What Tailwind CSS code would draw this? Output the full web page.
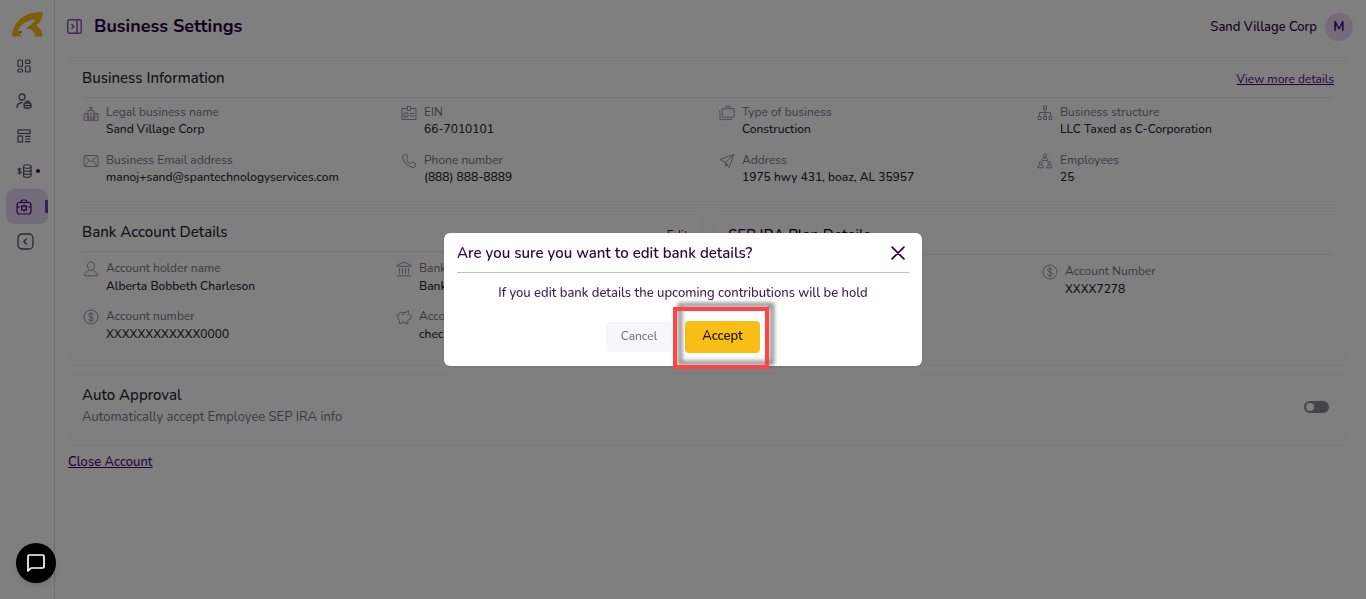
<!DOCTYPE html>
<html lang="en">
<head>
  <meta charset="UTF-8">
  <meta name="viewport" content="width=device-width, initial-scale=1.0">
  <title>Business Settings</title>
  <script src="https://cdn.jsdelivr.net/npm/@tailwindcss/browser@4"></script>
</head>
<body class="bg-white font-['Nunito','Noto_Sans',sans-serif] text-[12px] leading-4 text-[#24242a]">

  <!-- shared icons -->
  <svg class="hidden">
    <symbol id="i-building" viewBox="0 0 16 16"><path d="M1 15V8.500h4V15M5 15V5.500h6V15M11 15V8.500h4V15M.5 15.300h15M8 5.500V1.500M6 3h4M2.500 10.500h1M2.500 12.500h1M12.500 10.500h1M12.500 12.500h1M7 15v-3h2v3M7 8h2M7 10h2"/></symbol>
    <symbol id="i-badge" viewBox="0 0 16 16"><path d="M6 3.500H1v11h14v-11h-5M6.500 1.500h3v4h-3zM3 8h4v4H3zM9 8.500h4.500M9 11h4.500"/></symbol>
    <symbol id="i-cases" viewBox="0 0 17 16"><path d="M3.500 3.500h12.500v9H3.500zM7.500 3.500V1h4.500v2.500M1 5v10h13"/></symbol>
    <symbol id="i-tree" viewBox="0 0 16 16"><path d="M6.500 1h3v3h-3zM1 11.500h3v3H1zM6.500 11.500h3v3h-3zM12 11.500h3v3h-3zM8 4v7.500M2.500 11.500v-4h11v4"/></symbol>
    <symbol id="i-mail" viewBox="0 0 16 16"><rect x="1" y="2.500" width="14" height="11" rx="1"/><path d="M2 3.500l6 5.500 6-5.500M2 13l4-5.500M14 13l-4-5.500"/></symbol>
    <symbol id="i-phone" viewBox="0 0 16 16"><path d="M4.800 1.500L2.500 2C1.500 2.300 1.300 3.500 1.700 5c1.300 4.300 5 8 9.300 9.300 1.500.4 2.700.2 3-.8l.5-2.300c.1-.5-.2-.9-.6-1.100l-2.400-1c-.4-.2-.8 0-1.100.3l-1 1.200C7.500 9.700 6.300 8.500 5.400 6.600l1.200-1c.3-.3.5-.7.3-1.100l-1-2.400c-.2-.4-.6-.7-1.100-.6z"/></symbol>
    <symbol id="i-send" viewBox="0 0 16 16"><path d="M15 1.500L1 6.500l5.500 3L10 14.500zM15 1.500l-8.500 8v4L8.500 11"/></symbol>
    <symbol id="i-people" viewBox="0 0 16 16"><circle cx="8" cy="2.500" r="1.600"/><path d="M5 7.500c0-2 1.300-2.800 3-2.800s3 .8 3 2.800zM1 14.800c0-2 1-2.800 2.700-2.800s2.700.8 2.700 2.800zM9.600 14.800c0-2 1-2.800 2.700-2.800s2.700.8 2.700 2.800z"/><circle cx="3.700" cy="10" r="1.500"/><circle cx="12.300" cy="10" r="1.500"/></symbol>
    <symbol id="i-user" viewBox="0 0 16 16"><path d="M8 1C5.700 1 4.500 2.600 4.500 4.800 4.500 7.500 6 9.500 8 9.500s3.500-2 3.500-4.700C11.500 2.600 10.300 1 8 1zM6 9c0 1.500-4.500 1.500-4.500 5.800h13C14.500 10.500 10 10.500 10 9"/></symbol>
    <symbol id="i-bank" viewBox="0 0 16 16"><path d="M1 5.300V4.500L8 1l7 3.500v.8zM3.500 7v5.500M6.500 7v5.500M9.500 7v5.500M12.500 7v5.500M1 14.800h14"/></symbol>
    <symbol id="i-dollar" viewBox="0 0 16 16"><circle cx="8" cy="8" r="7"/><path d="M10.300 5.800C10 4.800 9.200 4.400 8 4.400c-1.400 0-2.300.7-2.300 1.700C5.700 8.600 10.400 7.300 10.400 10c0 1-1 1.700-2.400 1.700S5.700 11.100 5.500 10M8 3v10"/></symbol>
    <symbol id="i-pig" viewBox="0 0 16 16"><path d="M12.500 1.500L9.500 3.500H5.500C3 3.500 1.800 5.300 1.800 7.500c0 2 .9 3.200 1.700 4v3h2.700V13h3v1.500h2.600v-2.700l1.200-1.500 2-.6V6.500l-1.500-.4-1.200-1.800zM1.800 7.500C.8 7.500.7 6 1 5.500M5.800 5.300h3M11.500 6.500v.8"/></symbol>
  </svg>

  <div class="flex min-h-screen">
    <!-- sidebar -->
    <nav class="flex w-[55px] shrink-0 flex-col items-center border-r border-[#dcdcdc] pt-3 text-[#55505c]">
      <a href="#" aria-label="Home" class="block">
        <svg class="h-[25px] w-[31px]" viewBox="0 0 31 25"><path fill="#f9bd16" d="M0 24.500C1 10 11 0 30.500 0C30.500 6 29 10.500 24 13.500C28 16 30.500 19 30.500 24.500H23C23 20 20 16.500 13.500 16.500C18 14 21.500 11 23.500 7.500C15 8 9 12 6.500 18C7 21 8 22.500 10.500 24.500Z"/><circle cx="8.500" cy="20" r=".9" fill="#3b0764"/></svg>
      </a>
      <div class="mt-[11px] flex w-full flex-col px-[6px]">
        <a href="#" aria-label="Dashboard" class="flex h-[35px] items-center pl-[11px]">
          <svg class="size-[14px]" viewBox="0 0 14 14" fill="none" stroke="currentColor" stroke-width="1.200"><rect x="1" y="1" width="4.500" height="6.500" rx="1"/><rect x="8.500" y="1" width="4.500" height="3.500" rx="1"/><rect x="1" y="10" width="4.500" height="3" rx="1"/><rect x="8.500" y="7" width="4.500" height="6" rx="1"/></svg>
        </a>
        <a href="#" aria-label="Employees" class="flex h-[35px] items-center pl-[10px]">
          <svg class="size-4" viewBox="0 0 16 16" fill="none" stroke="currentColor" stroke-width="1.300"><circle cx="6" cy="4" r="3"/><path d="M1 15c0-4 2-5.500 5.500-5.500M10 10V8.500h3V10"/><rect x="8" y="10" width="7" height="5" rx="1.500"/><path d="M8 12.500h7"/></svg>
        </a>
        <a href="#" aria-label="Plans" class="flex h-[35px] items-center pl-[11px]">
          <svg class="size-[14px]" viewBox="0 0 14 14" fill="none" stroke="currentColor" stroke-width="1.200"><rect x="1" y="1" width="12" height="3.500"/><rect x="1" y="7" width="4.500" height="6"/><path d="M8 7.300h5.500M8 10h5.500M8 12.700h5.500"/></svg>
        </a>
        <a href="#" aria-label="Contributions" class="flex h-[35px] items-center gap-1 pl-[11px]">
          <svg class="h-[14px] w-[15px]" viewBox="0 0 15 14" fill="none" stroke="currentColor" stroke-width="1.100"><path d="M4 5.500C3.700 4.800 3.200 4.600 2.500 4.600 1.600 4.600 1 5 1 5.700 1 7.400 4.200 6.500 4.200 8.300c0 .7-.7 1.200-1.700 1.200C1.600 9.500 1 9.100.8 8.400M2.500 3.500v7"/><ellipse cx="10.300" cy="2.500" rx="3.800" ry="1.800"/><path d="M6.500 2.500v9c0 2.500 7.600 2.500 7.600 0v-9M6.500 5.500c0 2.400 7.600 2.400 7.600 0M6.500 8.500c0 2.400 7.600 2.400 7.600 0"/></svg>
          <span class="size-1 rounded-full bg-[#2a0050]"></span>
        </a>
        <a href="#" aria-label="Business settings" class="mt-px flex h-[35px] items-center justify-between rounded-lg bg-[#ead8f6] pl-[10px] text-[#4b0082]">
          <svg class="size-4" viewBox="0 0 16 16" fill="none" stroke="currentColor" stroke-width="1.200"><rect x="1" y="3.500" width="14" height="11.500" rx="2.500"/><path d="M5 3.500C5 1.500 5.500 1 7 1h2c1.500 0 2 .5 2 2.500M1 8h3M12 8h3"/><circle cx="8" cy="9" r="2.300"/><path stroke-width="1.400" d="M8 5.500v1.300M8 11.200v1.300M5 7.200l1.100.7M9.900 10.100l1.100.7M11 7.200l-1.100.7M6.100 10.100l-1.100.7"/></svg>
          <span class="h-[13px] w-[3px] bg-[#7b3fa5]"></span>
        </a>
        <a href="#" aria-label="Collapse" class="flex h-[35px] items-center pl-[11px]">
          <svg class="size-[17px]" viewBox="0 0 17 17" fill="none" stroke="currentColor" stroke-width="1.300"><rect x="1" y="1" width="15" height="15" rx="4"/><path d="M9.800 5.500l-3 3 3 3"/></svg>
        </a>
      </div>
    </nav>

    <main class="min-w-0 flex-1 pr-[18px] pl-[13px]">
      <header class="-mr-[5px] -ml-px flex h-[53px] items-center justify-between">
        <div class="flex items-center gap-3">
          <svg class="size-[15px]" viewBox="0 0 15 15" fill="none" stroke="#8a4fb5" stroke-width="1.400"><rect x=".8" y=".8" width="13.400" height="13.400" rx="1.500"/><path d="M10 1v13M4.500 5.300l2.300 2.200-2.300 2.200"/></svg>
          <h1 class="pb-[2px] text-[18px] leading-6 font-bold text-[#24003c]">Business Settings</h1>
        </div>
        <div class="flex items-center gap-2">
          <span class="text-[13px] font-medium text-[#24003c]">Sand Village Corp</span>
          <span class="flex size-7 items-center justify-center rounded-full bg-[#ead8f6] text-[13px] font-bold text-[#4b0082]">M</span>
        </div>
      </header>

      <section class="mt-1 h-[145px] rounded-md border border-[#f8f8fa] px-[13px]">
        <div class="flex h-10 items-center justify-between border-b border-[#ebebef]">
          <h2 class="text-[15px] font-medium">Business Information</h2>
          <a href="#" class="pt-[2px] text-[#4b0082] underline">View more details</a>
        </div>
        <div class="mt-[6px] grid grid-cols-4 gap-x-5 gap-y-[15px]">
          <dl class="flex gap-[7px] pl-px"><svg class="mt-px size-4 shrink-0 fill-none stroke-[#98929f]"><use href="#i-building"/></svg><div><dt class="text-[#77727f]">Legal business name</dt><dd class="mt-px font-medium">Sand Village Corp</dd></div></dl>
          <dl class="flex gap-[7px] pl-px"><svg class="mt-px size-4 shrink-0 fill-none stroke-[#98929f]"><use href="#i-badge"/></svg><div><dt class="text-[#77727f]">EIN</dt><dd class="mt-px font-medium">66-7010101</dd></div></dl>
          <dl class="flex gap-[7px] pl-px"><svg class="mt-px size-4 shrink-0 fill-none stroke-[#98929f]"><use href="#i-cases"/></svg><div><dt class="text-[#77727f]">Type of business</dt><dd class="mt-px font-medium">Construction</dd></div></dl>
          <dl class="flex gap-[7px] pl-px"><svg class="mt-px size-4 shrink-0 fill-none stroke-[#98929f]"><use href="#i-tree"/></svg><div><dt class="text-[#77727f]">Business structure</dt><dd class="mt-px font-medium">LLC Taxed as C-Corporation</dd></div></dl>
          <dl class="flex gap-[7px] pl-px"><svg class="mt-px size-4 shrink-0 fill-none stroke-[#98929f]"><use href="#i-mail"/></svg><div><dt class="text-[#77727f]">Business Email address</dt><dd class="mt-px font-medium">manoj+sand@spantechnologyservices.com</dd></div></dl>
          <dl class="flex gap-[7px] pl-px"><svg class="mt-px size-4 shrink-0 fill-none stroke-[#98929f]"><use href="#i-phone"/></svg><div><dt class="text-[#77727f]">Phone number</dt><dd class="mt-px font-medium">(888) 888-8889</dd></div></dl>
          <dl class="flex gap-[7px] pl-px"><svg class="mt-px size-4 shrink-0 fill-none stroke-[#98929f]"><use href="#i-send"/></svg><div><dt class="text-[#77727f]">Address</dt><dd class="mt-px font-medium">1975 hwy 431, boaz, AL 35957</dd></div></dl>
          <dl class="flex gap-[7px] pl-px"><svg class="mt-px size-4 shrink-0 fill-none stroke-[#98929f]"><use href="#i-people"/></svg><div><dt class="text-[#77727f]">Employees</dt><dd class="mt-px font-medium">25</dd></div></dl>
        </div>
      </section>

      <div class="mt-3 grid grid-cols-2 gap-3">
        <section class="h-[147px] rounded-md border border-[#f8f8fa] px-[13px]">
          <div class="flex h-[37px] items-center justify-between border-b border-[#ebebef] pb-[2px]">
            <h2 class="text-[15px] font-medium">Bank Account Details</h2>
            <a href="#" class="pt-[6px] font-medium text-[#4b0082] underline">Edit</a>
          </div>
          <div class="mt-2 grid grid-cols-2 gap-x-5 gap-y-[14px]">
            <dl class="flex gap-[7px] pl-px"><svg class="mt-px size-4 shrink-0 fill-none stroke-[#98929f]"><use href="#i-user"/></svg><div><dt class="text-[#77727f]">Account holder name</dt><dd class="mt-[2px] font-medium">Alberta Bobbeth Charleson</dd></div></dl>
            <dl class="flex gap-[7px] pl-px"><svg class="mt-px size-4 shrink-0 fill-none stroke-[#98929f]"><use href="#i-bank"/></svg><div><dt class="text-[#77727f]">Bank name</dt><dd class="mt-[2px] font-medium">Bank</dd></div></dl>
            <dl class="flex gap-[7px] pl-px"><svg class="mt-px size-4 shrink-0 fill-none stroke-[#98929f]"><use href="#i-dollar"/></svg><div><dt class="text-[#77727f]">Account number</dt><dd class="mt-[2px] font-medium">XXXXXXXXXXXX0000</dd></div></dl>
            <dl class="flex gap-[7px] pl-px"><svg class="mt-px size-4 shrink-0 fill-none stroke-[#98929f]"><use href="#i-pig"/></svg><div><dt class="text-[#77727f]">Account type</dt><dd class="mt-[2px] font-medium">checking</dd></div></dl>
          </div>
        </section>
        <section class="h-[147px] rounded-md border border-[#f8f8fa] px-[13px]">
          <div class="flex h-10 items-center border-b border-[#ebebef]">
            <h2 class="text-[15px] font-medium text-[#24003c]">SEP IRA Plan Details</h2>
          </div>
          <div class="mt-2 grid grid-cols-2 gap-x-5">
            <dl class="col-start-2 flex gap-[7px] pl-px"><svg class="mt-px size-4 shrink-0 fill-none stroke-[#98929f]"><use href="#i-dollar"/></svg><div><dt class="text-[#77727f]">Account Number</dt><dd class="mt-[2px] font-medium">XXXX7278</dd></div></dl>
          </div>
        </section>
      </div>

      <section class="mt-3 flex h-[68px] items-center justify-between rounded-md border border-[#f8f8fa] pr-[18px] pl-[13px]">
        <div>
          <h2 class="text-[15px] leading-5 font-medium">Auto Approval</h2>
          <p id="auto-desc" class="text-[13px] leading-6 text-[#77727f]">Automatically accept Employee SEP IRA info</p>
        </div>
        <label class="flex h-[12px] w-[25px] items-center rounded-full bg-[#8a8a8e] p-[2px] has-checked:justify-end">
          <input type="checkbox" aria-labelledby="auto-desc" class="size-2 appearance-none rounded-full bg-white">
        </label>
      </section>

      <a href="#" class="mt-[11px] inline-block text-[13px] leading-5 font-medium text-[#4b0082] underline">Close Account</a>
    </main>
  </div>

  <!-- confirm modal -->
  <div class="fixed inset-0 flex items-center justify-center bg-black/50">
    <div role="dialog" aria-labelledby="modal-title" class="w-[478px] rounded-md bg-white px-[13px] pb-[13px] shadow-sm">
      <div class="flex h-10 items-center justify-between border-b border-[#c5bccd]">
        <h2 id="modal-title" class="text-[15px] font-semibold text-[#2a0a3c]">Are you sure you want to edit bank details?</h2>
        <button aria-label="Close" class="mr-1">
          <svg class="size-[14px]" viewBox="0 0 13 13" stroke="#24003c" stroke-width="1.600" stroke-linecap="round"><path d="M1 1l11 11M12 1L1 12"/></svg>
        </button>
      </div>
      <p class="mt-3 text-center text-[13px] font-medium text-[#3d2152]">If you edit bank details the upcoming contributions will be hold</p>
      <div class="mt-5 flex items-center justify-center gap-[13px]">
        <button class="h-[30px] w-[66px] rounded bg-[#f7f7f9] pb-[3px] text-[#6b6870]">Cancel</button>
        <div class="relative">
          <button class="block h-8 w-[75px] rounded bg-[#f7be16] pb-[2px] text-[13px] font-semibold text-[#1a1205]">Accept</button>
          <!-- highlight frame -->
          <span class="pointer-events-none absolute -top-[14px] -right-[9px] -bottom-[16px] -left-[12px] border-4 border-[#ff4444] drop-shadow-[5px_-4px_2px_rgba(0,0,0,0.5)]"></span>
        </div>
      </div>
    </div>
  </div>

  <button aria-label="Open chat" class="fixed bottom-4 left-4 flex size-10 items-center justify-center rounded-full bg-black shadow-md">
    <svg class="size-[18px]" viewBox="0 0 18 18" fill="none" stroke="#fff" stroke-width="1.700" stroke-linejoin="round"><path d="M1 17V2.500C1 1.700 1.700 1 2.500 1h13c.8 0 1.500.7 1.500 1.500v10c0 .8-.7 1.500-1.500 1.500H4z"/></svg>
  </button>
</body>
</html>
